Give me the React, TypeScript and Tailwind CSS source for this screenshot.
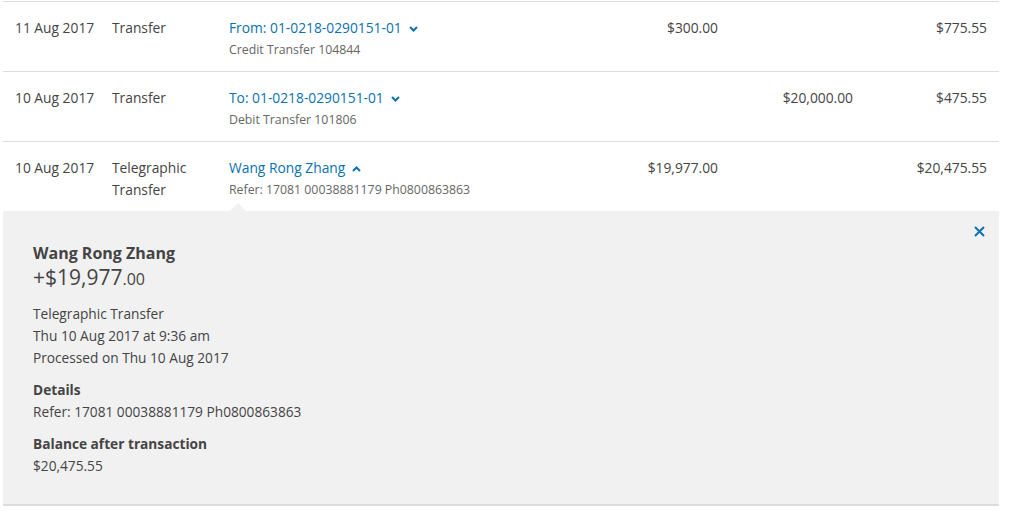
import { useState } from "react"

type Txn = {
  date: string
  type: string[]
  desc: string
  sub: string
  credit?: string
  debit?: string
  balance: string
  open?: boolean
}

const txns: Txn[] = [
  {
    date: "11 Aug 2017",
    type: ["Transfer"],
    desc: "From: 01-0218-0290151-01",
    sub: "Credit Transfer 104844",
    credit: "$300.00",
    balance: "$775.55",
  },
  {
    date: "10 Aug 2017",
    type: ["Transfer"],
    desc: "To: 01-0218-0290151-01",
    sub: "Debit Transfer 101806",
    debit: "$20,000.00",
    balance: "$475.55",
  },
  {
    date: "10 Aug 2017",
    type: ["Telegraphic", "Transfer"],
    desc: "Wang Rong Zhang",
    sub: "Refer: 17081 00038881179 Ph0800863863",
    credit: "$19,977.00",
    balance: "$20,475.55",
    open: true,
  },
]

function Chevron({ up }: { up?: boolean }) {
  return (
    <svg width="9" height="6" viewBox="0 0 9 6" className="ml-[7px] mt-px" fill="none">
      <path
        d={up ? "M1 5 L4.5 1.5 L8 5" : "M1 1 L4.5 4.5 L8 1"}
        stroke="#0a72b0"
        strokeWidth="2"
      />
    </svg>
  )
}

function Row({ t }: { t: Txn }) {
  return (
    <div className="grid grid-cols-[97px_117px_359px_130px_135px_134px] border-t border-[#dddddd] px-[12px] pt-[15px] pb-[10px] leading-[22px] h-[70px]">
      <div>{t.date}</div>
      <div>
        {t.type.map((l) => (
          <div key={l}>{l}</div>
        ))}
      </div>
      <div>
        <div className="flex items-center text-[#0a72b0]">
          {t.desc}
          <Chevron up={t.open} />
        </div>
        <div className="text-[12.3px] text-[#666666]">{t.sub}</div>
      </div>
      <div className="text-right">{t.credit}</div>
      <div className="text-right">{t.debit}</div>
      <div className="text-right">{t.balance}</div>
    </div>
  )
}

function Detail() {
  return (
    <div className="relative bg-[#f1f1f1] border-b-2 border-[#dcdcdc] pl-[30px] pt-[31px] pb-[27px] text-[13.7px] leading-[22px] text-[#444444]">
      {/* pointer above the expanded row */}
      <div className="absolute left-[227px] -top-[8px] w-0 h-0 border-l-[8px] border-r-[8px] border-b-[8px] border-l-transparent border-r-transparent border-b-[#f1f1f1]" />
      <button className="absolute right-[13px] top-[14px] p-[1px]">
        <svg width="11" height="11" viewBox="0 0 11 11">
          <path d="M1 1 L10 10 M10 1 L1 10" stroke="#0a72b0" strokeWidth="2" />
        </svg>
      </button>
      <div className="text-[16px] font-bold">Wang Rong Zhang</div>
      <div className="text-[21px] leading-[27px]">
        +$19,977<span className="text-[16px]">.00</span>
      </div>
      <div className="mt-[10px]">
        <div>Telegraphic Transfer</div>
        <div>Thu 10 Aug 2017 at 9:36 am</div>
        <div>Processed on Thu 10 Aug 2017</div>
      </div>
      <div className="mt-[10px]">
        <div className="font-bold">Details</div>
        <div>Refer: 17081 00038881179 Ph0800863863</div>
      </div>
      <div className="mt-[10px]">
        <div className="font-bold">Balance after transaction</div>
        <div>$20,475.55</div>
      </div>
    </div>
  )
}

export default function App() {
  const [rows] = useState(txns)
  return (
    <div className="min-h-[522px] bg-white pt-px" style={{ fontFamily: '"Open Sans", sans-serif' }}>
      <div className="ml-[3px] w-[996px] text-[13.8px] text-[#444444]">
        {rows.map((t, i) => (
          <Row key={i} t={t} />
        ))}
        <Detail />
      </div>
    </div>
  )
}
